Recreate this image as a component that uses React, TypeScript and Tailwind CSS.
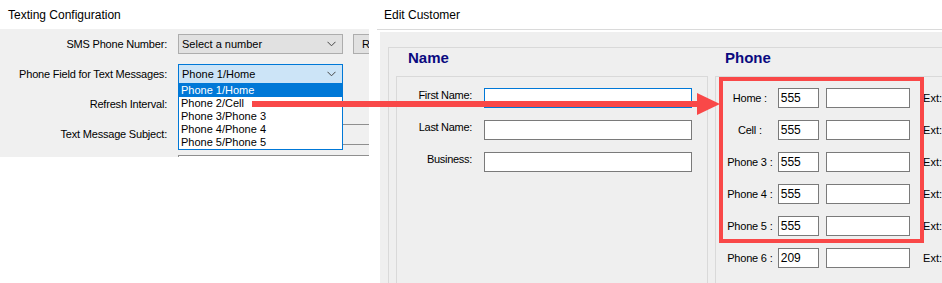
const font = { fontFamily: '"Liberation Sans", Arial, sans-serif' };

function Chevron() {
  return (
    <svg width="9" height="6" viewBox="0 0 9 6" className="shrink-0">
      <polyline points="0.5,0.8 4.5,4.8 8.5,0.8" fill="none" stroke="#444" strokeWidth="1" />
    </svg>
  );
}

const listItems = ["Phone 1/Home", "Phone 2/Cell", "Phone 3/Phone 3", "Phone 4/Phone 4", "Phone 5/Phone 5"];

function TextingConfig() {
  return (
    <div className="flex w-[369px] shrink-0 flex-col">
      <div className="flex h-[29px] items-center pl-[8px] text-[12px] text-black">Texting Configuration</div>
      <div className="h-[128px] overflow-hidden bg-[#f0f0f0] text-[11px] text-black">
        <div className="grid grid-cols-[167px_1fr] gap-x-[11px]">
          <div className="flex h-[30px] items-center justify-end tracking-[-0.2px]">SMS Phone Number:</div>
          <div className="flex h-[30px] items-center gap-[10px]">
            <div className="flex h-[20px] w-[165px] shrink-0 items-center justify-between border border-[#adadad] bg-[#e1e1e1] pl-[3px] pr-[6px]">
              <span>Select a number</span>
              <Chevron />
            </div>
            <div className="flex h-[20px] w-[40px] shrink-0 items-center border border-[#adadad] bg-[#e1e1e1] pl-[8px]">R</div>
          </div>

          <div className="flex h-[30px] items-center justify-end tracking-[-0.2px]">Phone Field for Text Messages:</div>
          <div className="flex h-[30px] items-center">
            <div className="flex h-[20px] w-[165px] items-center justify-between border border-[#0078d7] bg-[#cce4f7] pl-[3px] pr-[6px]">
              <span>Phone 1/Home</span>
              <Chevron />
            </div>
          </div>

          <div className="flex h-[30px] items-center justify-end tracking-[-0.2px]">Refresh Interval:</div>
          <div className="h-[30px]" />

          <div className="flex h-[30px] items-center justify-end tracking-[-0.2px]">Text Message Subject:</div>
          <div className="flex h-[30px] items-center">
            <div className="h-[21px] w-[220px] border border-[#8f8f8f] bg-[#f0f0f0]" />
          </div>

          <div className="h-[30px]" />
          <div className="pt-[6px]">
            <div className="h-[30px] w-[220px] border border-[#8f8f8f] bg-white" />
          </div>
        </div>
      </div>
    </div>
  );
}

function NameRow({ label, focused }: { label: string; focused?: boolean }) {
  return (
    <div className="flex h-[20px] items-start gap-[12px]">
      <div className="w-[75px] text-right leading-[14px] tracking-[-0.3px]">{label}</div>
      <div className={`h-[20px] w-[208px] border bg-white ${focused ? "border-[#0078d7]" : "border-[#7a7a7a]"}`} />
    </div>
  );
}

function PhoneRow({ label, value }: { label: string; value: string }) {
  return (
    <div className="flex h-[20px] items-center">
      <div className="w-[56px] text-center tracking-[-0.2px]">{label}</div>
      <div className="flex h-[20px] w-[41px] items-center border border-[#7a7a7a] bg-white pl-[2px] text-[12px]">{value}</div>
      <div className="ml-[7px] h-[20px] w-[85px] border border-[#7a7a7a] bg-white" />
      <div className="ml-[13px]">Ext:</div>
    </div>
  );
}

function EditCustomer() {
  const phones: [string, string][] = [
    ["Home :", "555"],
    ["Cell :", "555"],
    ["Phone 3 :", "555"],
    ["Phone 4 :", "555"],
    ["Phone 5 :", "555"],
    ["Phone 6 :", "209"],
  ];
  return (
    <div className="ml-[8px] flex min-w-0 flex-1 flex-col">
      <div className="flex h-[30px] items-center border-b border-[#dadada] pl-[7px] text-[12px] text-black">Edit Customer</div>
      <div className="ml-[3px] mt-[2px] flex-1 bg-[#efefef] pl-[8px] pt-[15px]">
        <div className="flex h-full border-l border-t border-[#d9d9d9] pl-[7px] text-[11px] text-black">
          <div className="flex w-[312px] shrink-0 flex-col">
            <div className="h-[28px] pl-[12px] pt-[2px] text-[15px] font-bold leading-[16px] text-[#0a0a80]">Name</div>
            <div className="flex flex-1 flex-col gap-[12px] border-l border-r border-t border-[#d9d9d9] pt-[11px]">
              <NameRow label="First Name:" focused />
              <NameRow label="Last Name:" />
              <NameRow label="Business:" />
            </div>
          </div>
          <div className="ml-[7px] flex min-w-0 flex-1 flex-col">
            <div className="h-[28px] pl-[10px] pt-[2px] text-[15px] font-bold leading-[16px] text-[#0a0a80]">Phone</div>
            <div className="flex flex-1 flex-col gap-[12px] border-l border-t border-[#d9d9d9] pl-[6px] pt-[11px]">
              {phones.map(([l, v]) => (
                <PhoneRow key={l} label={l} value={v} />
              ))}
            </div>
          </div>
        </div>
      </div>
    </div>
  );
}

export default function App() {
  return (
    <div className="relative flex h-[283px] w-[942px] overflow-hidden bg-white" style={font}>
      <TextingConfig />
      <EditCustomer />

      {/* open dropdown list */}
      <div className="absolute left-[178px] top-[83px] w-[165px] border border-[#0078d7] bg-white text-[11px] text-black">
        {listItems.map((item, i) => (
          <div
            key={item}
            className={`h-[13px] pl-[2px] leading-[13px] ${i === 0 ? "bg-[#0078d7] text-white" : ""}`}
          >
            {item}
          </div>
        ))}
      </div>

      {/* red highlight box */}
      <div className="absolute left-[719px] top-[77px] h-[166px] w-[205px] border-[4px] border-[#f94848]" />

      {/* arrow */}
      <svg className="pointer-events-none absolute left-0 top-0" width="942" height="283">
        <line x1="252" y1="104" x2="700" y2="104" stroke="#f94848" strokeWidth="6" />
        <polygon points="697,93 720,104 697,115" fill="#f94848" />
      </svg>
    </div>
  );
}
